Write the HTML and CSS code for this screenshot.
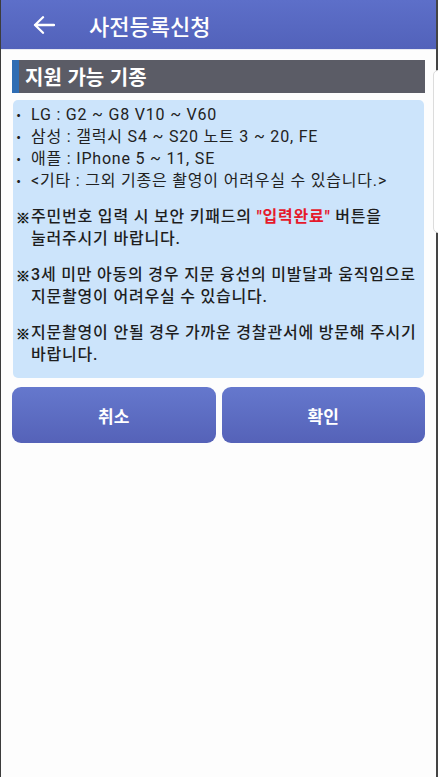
FILE: index.html
```html
<!DOCTYPE html>
<html lang="ko">
<head>
<meta charset="utf-8">
<title>사전등록신청</title>
<link rel="stylesheet" href="styles.css">
</head>
<body>
<div class="screen">
  <header class="appbar">
    <svg class="back" viewBox="0 0 22 18" width="22" height="18">
      <path d="M21 9H2M10 1.2L2 9l8 7.8" fill="none" stroke="#fff" stroke-width="2.3" stroke-linecap="round" stroke-linejoin="round"/>
    </svg>
    <h1 class="title">사전등록신청</h1>
  </header>
  <main class="content">
    <h2 class="section">지원 가능 기종</h2>
    <div class="info">
      <p class="line"><span class="dot">·</span>LG : G2 ~ G8 V10 ~ V60</p>
      <p class="line"><span class="dot">·</span>삼성 : 갤럭시 S4 ~ S20 노트 3 ~ 20, FE</p>
      <p class="line"><span class="dot">·</span>애플 : IPhone 5 ~ 11, SE</p>
      <p class="line"><span class="dot">·</span>&lt;기타 : 그외 기종은 촬영이 어려우실 수 있습니다.&gt;</p>
      <p class="note"><span class="mark">※</span><span>주민번호 입력 시 보안 키패드의 <b class="red">"입력완료"</b> 버튼을 눌러주시기 바랍니다.</span></p>
      <p class="note"><span class="mark">※</span><span>3세 미만 아동의 경우 지문 융선의 미발달과 움직임으로 지문촬영이 어려우실 수 있습니다.</span></p>
      <p class="note"><span class="mark">※</span><span>지문촬영이 안될 경우 가까운 경찰관서에 방문해 주시기 바랍니다.</span></p>
    </div>
    <div class="actions">
      <button class="btn">취소</button>
      <button class="btn">확인</button>
    </div>
  </main>
  <div class="peek"></div>
</div>
</body>
</html>
```
FILE: styles.css
```css
* { box-sizing: border-box; }
html, body { margin: 0; padding: 0; }
body {
  width: 438px;
  height: 777px;
  background: #fdfdfd;
  font-family: Roboto, "Noto Sans CJK KR", sans-serif;
  overflow: hidden;
}
.screen {
  position: relative;
  height: 777px;
  border-left: 1px solid #3c3c3c;
  border-right: 2px solid #444;
  background: #fdfdfd;
}
.appbar {
  height: 50px;
  display: flex;
  align-items: center;
  padding-left: 32px;
  background: linear-gradient(#5d6fc9, #5262ba);
  border-bottom: 1px solid #e6e8f2;
}
.back { display: block; flex: none; }
.title {
  margin: 0 0 0 34px;
  color: #fff;
  font-family: "Noto Sans CJK KR", sans-serif;
  font-weight: 500;
  font-size: 22px;
  line-height: 1;
}
.content {
  padding: 10px 11px 0 11px;
}
.section {
  margin: 0;
  height: 33px;
  background: #5b5c66;
  border-left: 7px solid #2f6db3;
  color: #fff;
  font-family: "Noto Sans CJK KR", sans-serif;
  font-weight: 700;
  font-size: 20px;
  line-height: 33px;
  padding-left: 6px;
}
.info {
  margin-top: 7px;
  margin-left: 1px;
  margin-right: 1px;
  background: #cce4fb;
  border-radius: 5px;
  padding: 4px 2px 12px 2px;
  color: #222;
  letter-spacing: 0.8px;
}
.line {
  margin: 0;
  font-size: 16px;
  line-height: 22px;
  display: flex;
}
.dot {
  flex: none;
  width: 16px;
  padding-left: 1px;
  font-family: "Noto Sans CJK KR", sans-serif;
  font-weight: 700;
  letter-spacing: 0;
}
.note {
  margin: 14px 0 0 0;
  display: flex;
  font-size: 16px;
  line-height: 22px;
  font-weight: 500;
  color: #1e1e1e;
  word-break: keep-all;
}
.mark {
  flex: none;
  width: 16px;
  padding-left: 1px;
  font-family: "Noto Sans CJK KR", sans-serif;
  font-size: 14px;
  font-weight: 900;
  color: #111;
  letter-spacing: 0;
  -webkit-text-stroke: 0.5px #111;
}
.red { color: #e5192b; font-weight: 700; }
.actions {
  margin-top: 9px;
  display: grid;
  grid-template-columns: 1fr 1fr;
  gap: 6px;
}
.btn {
  height: 56px;
  border: none;
  border-radius: 9px;
  background: linear-gradient(#6578cd, #5562b8);
  color: #fff;
  font-family: "Noto Sans CJK KR", sans-serif;
  font-weight: 700;
  font-size: 17px;
  padding: 0;
}
.peek {
  position: absolute;
  left: 432px;
  top: 70px;
  width: 10px;
  height: 163px;
  border: 1px solid #dcdcdc;
  border-radius: 5px 0 0 5px;
  background: #fff;
}
```
